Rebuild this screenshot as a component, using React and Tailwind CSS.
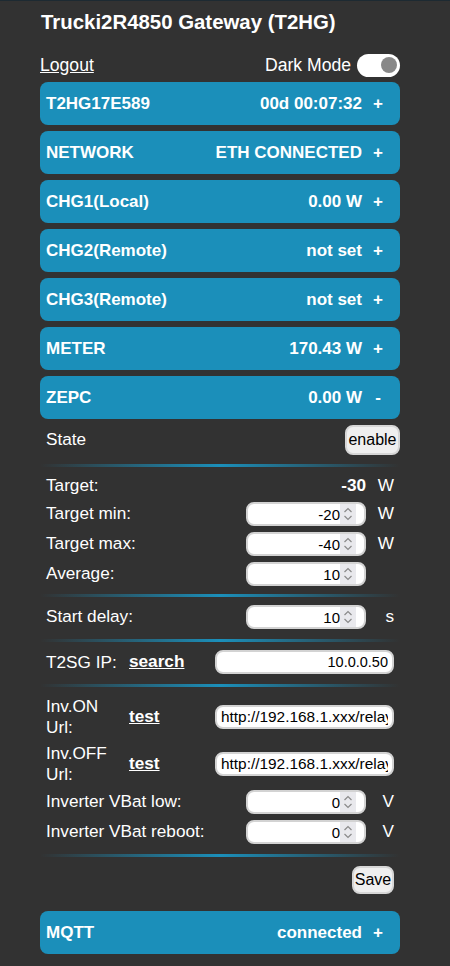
import { useState } from 'react'

const BARS = [
  { name: 'T2HG17E589', value: '00d 00:07:32', sign: '+' },
  { name: 'NETWORK', value: 'ETH CONNECTED', sign: '+' },
  { name: 'CHG1(Local)', value: '0.00 W', sign: '+' },
  { name: 'CHG2(Remote)', value: 'not set', sign: '+' },
  { name: 'CHG3(Remote)', value: 'not set', sign: '+' },
  { name: 'METER', value: '170.43 W', sign: '+' },
  { name: 'ZEPC', value: '0.00 W', sign: '-' },
]

function Bar({ name, value, sign, className = '' }) {
  return (
    <div className={`flex items-center justify-between h-[43px] rounded-[8px] bg-[#1b8fba] pl-[6px] pr-[6px] text-white font-bold text-[17px] ${className}`}>
      <span>{name}</span>
      <span className="flex items-center">
        <span>{value}</span>
        <span className="w-[32px] text-center">{sign}</span>
      </span>
    </div>
  )
}

function Divider({ className = '' }) {
  return <div className={`h-[3px] bg-linear-to-r from-transparent via-[#1b8fba] to-transparent ${className}`} />
}

function Spinner() {
  return (
    <span className="w-[16px] h-full bg-[#e9e9ed] flex items-center justify-center">
      <svg width="10" height="16" viewBox="0 0 10 16" fill="none" stroke="#8a8a8a" strokeWidth="1.2">
        <path d="M1.5 6 L5 2.5 L8.5 6" />
        <path d="M1.5 10 L5 13.5 L8.5 10" />
      </svg>
    </span>
  )
}

function NumInput({ value }) {
  const [v, setV] = useState(value)
  return (
    <div className="w-[120px] h-[24px] rounded-[8px] border-2 border-[#d3d3d3] bg-white flex items-center overflow-hidden pr-[8px]">
      <input
        type="text"
        inputMode="numeric"
        value={v}
        onChange={(e) => setV(e.target.value)}
        className="flex-1 min-w-0 h-full pl-[3px] text-right text-[15px] text-black bg-transparent outline-none"
      />
      <Spinner />
    </div>
  )
}

function TextInput({ value, right }) {
  const [v, setV] = useState(value)
  return (
    <input
      type="text"
      value={v}
      onChange={(e) => setV(e.target.value)}
      className={`w-[179px] h-[24px] rounded-[8px] border-2 border-[#d3d3d3] bg-white px-[4px] text-black outline-none ${right ? 'text-right text-[14.5px]' : 'text-[15.4px]'}`}
    />
  )
}

function Row({ label, input, unit }) {
  return (
    <div className="flex items-center h-[30px]">
      <span className="flex-1 pl-[6px]">{label}</span>
      <span className="w-[120px] flex justify-end">{input}</span>
      <span className="w-[34px] text-right pr-[6px]">{unit}</span>
    </div>
  )
}

function LinkRow({ label, link, value, tall, right }) {
  return (
    <div className={`flex items-center ${tall ? 'h-[47px]' : 'h-[30px]'}`}>
      <span className="w-[89px] pl-[6px] pr-[8px] leading-[21px]">{label}</span>
      <span className="w-[86px] font-bold underline">{link}</span>
      <TextInput value={value} right={right} />
    </div>
  )
}

export default function App() {
  const [dark, setDark] = useState(true)

  return (
    <div className="min-h-[966px] bg-[#323232] text-white border-t border-[#1d2a32] text-[17.2px]" style={{ fontFamily: '"Liberation Sans", Arial, sans-serif' }}>
      <div className="ml-[40px] w-[360px]">
        <h3 className="pt-[9px] leading-[24px] text-[20.4px] font-bold pl-[1px]">Trucki2R4850 Gateway (T2HG)</h3>

        <div className="mt-[19px] flex items-center justify-between h-[24px] text-[17.6px]">
          <a href="#" className="underline">Logout</a>
          <div className="flex items-center gap-[6px]">
            <span>Dark Mode</span>
            <button
              onClick={() => setDark(!dark)}
              className={`w-[43px] h-[23px] rounded-full bg-white flex items-center px-[3px] ${dark ? 'justify-end' : 'justify-start'}`}
              aria-label="Dark Mode"
            >
              <span className="w-[16px] h-[16px] rounded-full bg-[#888888]" />
            </button>
          </div>
        </div>

        <div className="mt-[5px] flex flex-col gap-[6px]">
          {BARS.map((b) => (
            <Bar key={b.name} {...b} />
          ))}
        </div>

        <div className="mt-[6px] flex items-center justify-between h-[30px]">
          <span className="pl-[6px]">State</span>
          <button className="h-[30px] w-[55px] rounded-[8px] border-2 border-[#d6d6d6] bg-[#efefef] text-black text-[16px]">enable</button>
        </div>

        <Divider className="mt-[9px]" />

        <div className="mt-[6px]">
          <div className="flex items-center h-[26px]">
            <span className="flex-1 pl-[6px]">Target:</span>
            <span className="w-[120px] text-right font-bold">-30</span>
            <span className="w-[34px] text-right pr-[6px]">W</span>
          </div>
          <Row label="Target min:" input={<NumInput value="-20" />} unit="W" />
          <Row label="Target max:" input={<NumInput value="-40" />} unit="W" />
          <Row label="Average:" input={<NumInput value="10" />} unit="" />
        </div>

        <Divider className="mt-[5px]" />

        <div className="mt-[5px]">
          <Row label="Start delay:" input={<NumInput value="10" />} unit="s" />
        </div>

        <Divider className="mt-[7px]" />

        <div className="mt-[5px]">
          <LinkRow label="T2SG IP:" link="search" value="10.0.0.50" right />
        </div>

        <Divider className="mt-[7px]" />

        <div className="mt-[6px]">
          <LinkRow tall label="Inv.ON Url:" link="test" value="http://192.168.1.xxx/relay/0?turn=on" />
          <LinkRow tall label="Inv.OFF Url:" link="test" value="http://192.168.1.xxx/relay/0?turn=off" />
          <Row label="Inverter VBat low:" input={<NumInput value="0" />} unit="V" />
          <Row label="Inverter VBat reboot:" input={<NumInput value="0" />} unit="V" />
        </div>

        <Divider className="mt-[7px]" />

        <div className="mt-[9px] flex justify-end pr-[6px]">
          <button className="h-[28px] w-[42px] rounded-[8px] border-2 border-[#d6d6d6] bg-[#efefef] text-black text-[16px]">Save</button>
        </div>

        <Bar name="MQTT" value="connected" sign="+" className="mt-[17px]" />
      </div>
    </div>
  )
}
